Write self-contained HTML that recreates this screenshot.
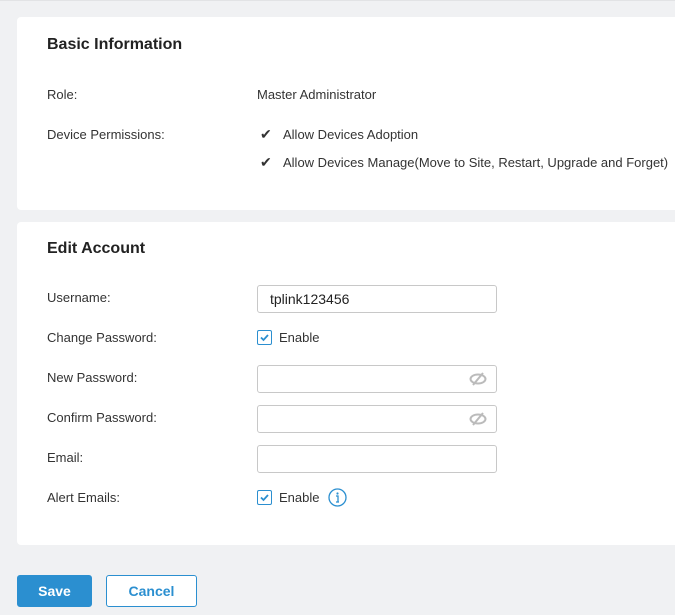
<!DOCTYPE html>
<html><head><style>
*{margin:0;padding:0;box-sizing:border-box}
body{width:675px;height:615px;background:#f0f1f3;font-family:"Liberation Sans",Arial,sans-serif;color:#333;font-size:13px;position:relative;overflow:hidden}
.card{position:absolute;left:17px;width:670px;background:#fff;border-radius:4px}
.a{position:absolute;white-space:nowrap}
h2{position:absolute;font-size:16px;font-weight:bold;color:#222}
.inp{position:absolute;left:257px;width:240px;height:28px;border:1px solid #c8c8c8;border-radius:3px;background:#fff;font-size:14px;padding:5px 0 0 12px;color:#222}
.cb{position:absolute;left:257px;width:15px;height:15px;border:1px solid #2b8fd0;border-radius:2px}
.btn{position:absolute;top:575px;height:32px;border-radius:3px;font-weight:bold;font-size:14px;text-align:center;line-height:30px}
</style></head><body>
<div style="position:absolute;left:0;top:0;width:675px;height:1px;background:#e2e3e5"></div>
<div class="card" style="top:17px;height:193px"></div>
<div class="card" style="top:222px;height:323px"></div>
<h2 style="left:47px;top:36px">Basic Information</h2>
<div class="a" style="left:47px;top:87px">Role:</div>
<div class="a" style="left:257px;top:87px">Master Administrator</div>
<div class="a" style="left:47px;top:127px">Device Permissions:</div>
<div class="a" style="left:260px;top:126px;font-size:14px">✔</div>
<div class="a" style="left:283px;top:127px">Allow Devices Adoption</div>
<div class="a" style="left:260px;top:154px;font-size:14px">✔</div>
<div class="a" style="left:283px;top:155px">Allow Devices Manage(Move to Site, Restart, Upgrade and Forget)</div>
<h2 style="left:47px;top:240px">Edit Account</h2>
<div class="a" style="left:47px;top:290px">Username:</div>
<div class="inp" style="top:285px">tplink123456</div>
<div class="a" style="left:47px;top:330px">Change Password:</div>
<div class="cb" style="top:330px"><svg width="13" height="13" viewBox="0 0 13 13"><path d="M3 6.5L5.5 9L10 4" stroke="#2b8fd0" stroke-width="1.8" fill="none"/></svg></div>
<div class="a" style="left:279px;top:330px">Enable</div>
<div class="a" style="left:47px;top:370px">New Password:</div>
<div class="inp" style="top:365px"><svg style="position:absolute;right:9px;top:6px" width="18" height="14" viewBox="0 0 18 14"><ellipse cx="9" cy="7" rx="7.5" ry="4.5" fill="none" stroke="#bbb" stroke-width="2"/><path d="M14 1L4 13" stroke="#bbb" stroke-width="2"/></svg></div>
<div class="a" style="left:47px;top:410px">Confirm Password:</div>
<div class="inp" style="top:405px"><svg style="position:absolute;right:9px;top:6px" width="18" height="14" viewBox="0 0 18 14"><ellipse cx="9" cy="7" rx="7.5" ry="4.5" fill="none" stroke="#bbb" stroke-width="2"/><path d="M14 1L4 13" stroke="#bbb" stroke-width="2"/></svg></div>
<div class="a" style="left:47px;top:450px">Email:</div>
<div class="inp" style="top:445px"></div>
<div class="a" style="left:47px;top:490px">Alert Emails:</div>
<div class="cb" style="top:490px"><svg width="13" height="13" viewBox="0 0 13 13"><path d="M3 6.5L5.5 9L10 4" stroke="#2b8fd0" stroke-width="1.8" fill="none"/></svg></div>
<div class="a" style="left:279px;top:490px">Enable</div>
<svg class="a" style="left:328px;top:488px" width="19" height="19" viewBox="0 0 19 19"><circle cx="9.5" cy="9.5" r="8.5" fill="none" stroke="#2b8fd0" stroke-width="1.3"/><circle cx="9.5" cy="5.5" r="1.1" fill="#2b8fd0"/><path d="M8 8h2v6M8 14h3" stroke="#2b8fd0" stroke-width="1.3" fill="none"/></svg>
<div class="btn" style="left:17px;width:75px;background:#2b8fd0;color:#fff;border:1px solid #2b8fd0">Save</div>
<div class="btn" style="left:106px;width:91px;background:#fff;color:#2b8fd0;border:1px solid #2b8fd0">Cancel</div>
</body></html>
